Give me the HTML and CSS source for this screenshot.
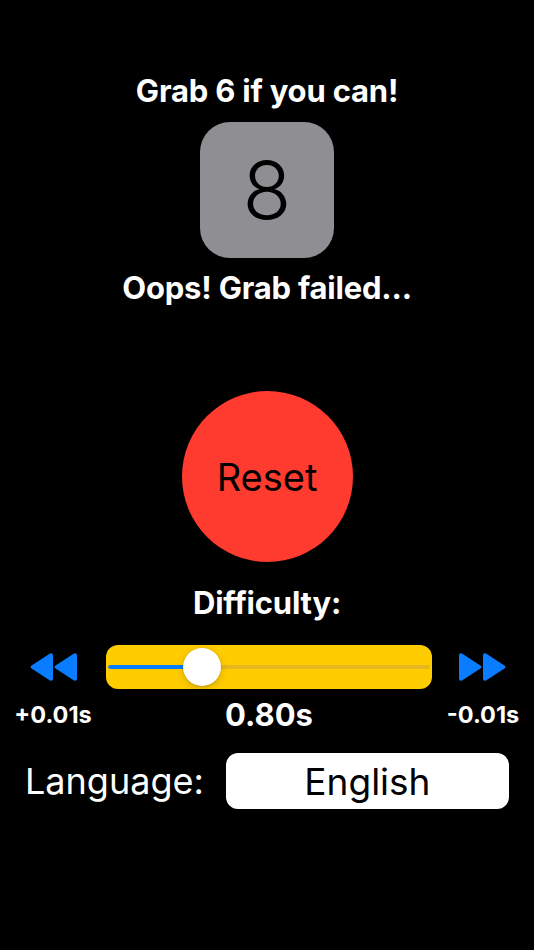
FILE: index.html
```html
<!DOCTYPE html>
<html lang="en">
<head>
<meta charset="utf-8">
<title>Grab</title>
<link rel="stylesheet" href="styles.css">
</head>
<body>
<main class="screen">
  <h1 class="title">Grab 6 if you can!</h1>
  <div class="tile">8</div>
  <p class="status">Oops! Grab failed...</p>
  <button class="reset">Reset</button>
  <p class="diff-label">Difficulty:</p>
  <div class="slider-row">
    <svg class="step-icon" viewBox="0 0 48 28" width="48" height="28" aria-hidden="true">
      <path d="M2.6 15.6 L20.6 27.2 C22.4 28.4 24 27.6 24 25.6 L24 2.4 C24 0.4 22.4 -0.4 20.6 0.8 L2.6 12.4 C1.2 13.3 1.2 14.7 2.6 15.6 Z"/>
      <path d="M26.6 15.6 L44.6 27.2 C46.4 28.4 48 27.6 48 25.6 L48 2.4 C48 0.4 46.4 -0.4 44.6 0.8 L26.6 12.4 C25.2 13.3 25.2 14.7 26.6 15.6 Z"/>
    </svg>
    <div class="slider">
      <div class="track">
        <div class="track-fill" style="width: 29.5%"></div>
      </div>
      <div class="thumb" style="left: 29.5%"></div>
    </div>
    <svg class="step-icon" viewBox="0 0 48 28" width="48" height="28" aria-hidden="true">
      <path d="M45.4 15.6 L27.4 27.2 C25.6 28.4 24 27.6 24 25.6 L24 2.4 C24 0.4 25.6 -0.4 27.4 0.8 L45.4 12.4 C46.8 13.3 46.8 14.7 45.4 15.6 Z"/>
      <path d="M21.4 15.6 L3.4 27.2 C1.6 28.4 0 27.6 0 25.6 L0 2.4 C0 0.4 1.6 -0.4 3.4 0.8 L21.4 12.4 C22.8 13.3 22.8 14.7 21.4 15.6 Z"/>
    </svg>
  </div>
  <div class="value-row">
    <span class="step-label">+0.01s</span>
    <span class="value">0.80s</span>
    <span class="step-label">-0.01s</span>
  </div>
  <div class="lang-row">
    <span class="lang-label">Language:</span>
    <div class="lang-box">English</div>
  </div>
</main>
</body>
</html>
```

FILE: styles.css
```css
html, body {
  margin: 0;
  padding: 0;
  background: #000;
}

body {
  font-family: Inter, "Noto Sans", "Liberation Sans", sans-serif;
  color: #fff;
  width: 534px;
  height: 950px;
  overflow: hidden;
}

.screen {
  display: flex;
  flex-direction: column;
  align-items: center;
}

.title,
.status,
.diff-label {
  margin: 0;
  font-weight: 700;
  font-size: 31px;
  line-height: 32px;
  letter-spacing: -0.2px;
}

.title {
  margin-top: 75px;
}

.tile {
  margin-top: 15px;
  width: 134px;
  height: 136px;
  border-radius: 30px;
  background: #8e8e93;
  color: #000;
  display: flex;
  align-items: center;
  justify-content: center;
  font-size: 80px;
  font-weight: 300;
  line-height: 1;
}

.status {
  margin-top: 14px;
}

.reset {
  margin-top: 87px;
  width: 171px;
  height: 171px;
  border: none;
  border-radius: 50%;
  background: #ff3b30;
  color: #000;
  font-family: inherit;
  font-size: 38px;
  font-weight: 400;
  padding: 0;
}

.diff-label {
  margin-top: 25px;
}

.slider-row {
  margin-top: 26px;
  width: 100%;
  display: grid;
  grid-template-columns: 106px 326px 1fr;
  align-items: center;
  height: 44px;
}

.step-icon {
  justify-self: center;
  fill: #0a7cff;
}

.slider {
  position: relative;
  height: 44px;
  background: #ffcc00;
  border-radius: 12px;
}

.track {
  position: absolute;
  left: 2px;
  right: 2px;
  top: 20px;
  height: 4px;
  border-radius: 2px;
  background: #e5b820;
  overflow: hidden;
}

.track-fill {
  height: 100%;
  background: #0a7cff;
  border-radius: 2px;
}

.thumb {
  position: absolute;
  top: 3px;
  width: 38px;
  height: 38px;
  margin-left: -19px;
  border-radius: 50%;
  background: #fff;
  box-shadow: 0 3px 8px rgba(0, 0, 0, 0.15), 0 0.5px 2px rgba(0, 0, 0, 0.2);
}

.value-row {
  margin-top: 7px;
  width: 100%;
  display: grid;
  grid-template-columns: 106px 326px 1fr;
  align-items: center;
  text-align: center;
  height: 28px;
}

.step-label {
  font-size: 23.5px;
  font-weight: 700;
}

.value {
  font-size: 31px;
  font-weight: 700;
}

.lang-row {
  margin-top: 29px;
  width: 100%;
  box-sizing: border-box;
  padding: 0 25px;
  display: flex;
  align-items: center;
  gap: 22px;
}

.lang-label {
  font-size: 36px;
  font-weight: 400;
}

.lang-box {
  flex: 1;
  height: 56px;
  border-radius: 12px;
  background: #fff;
  color: #000;
  display: flex;
  align-items: center;
  justify-content: center;
  font-size: 37px;
}
```
